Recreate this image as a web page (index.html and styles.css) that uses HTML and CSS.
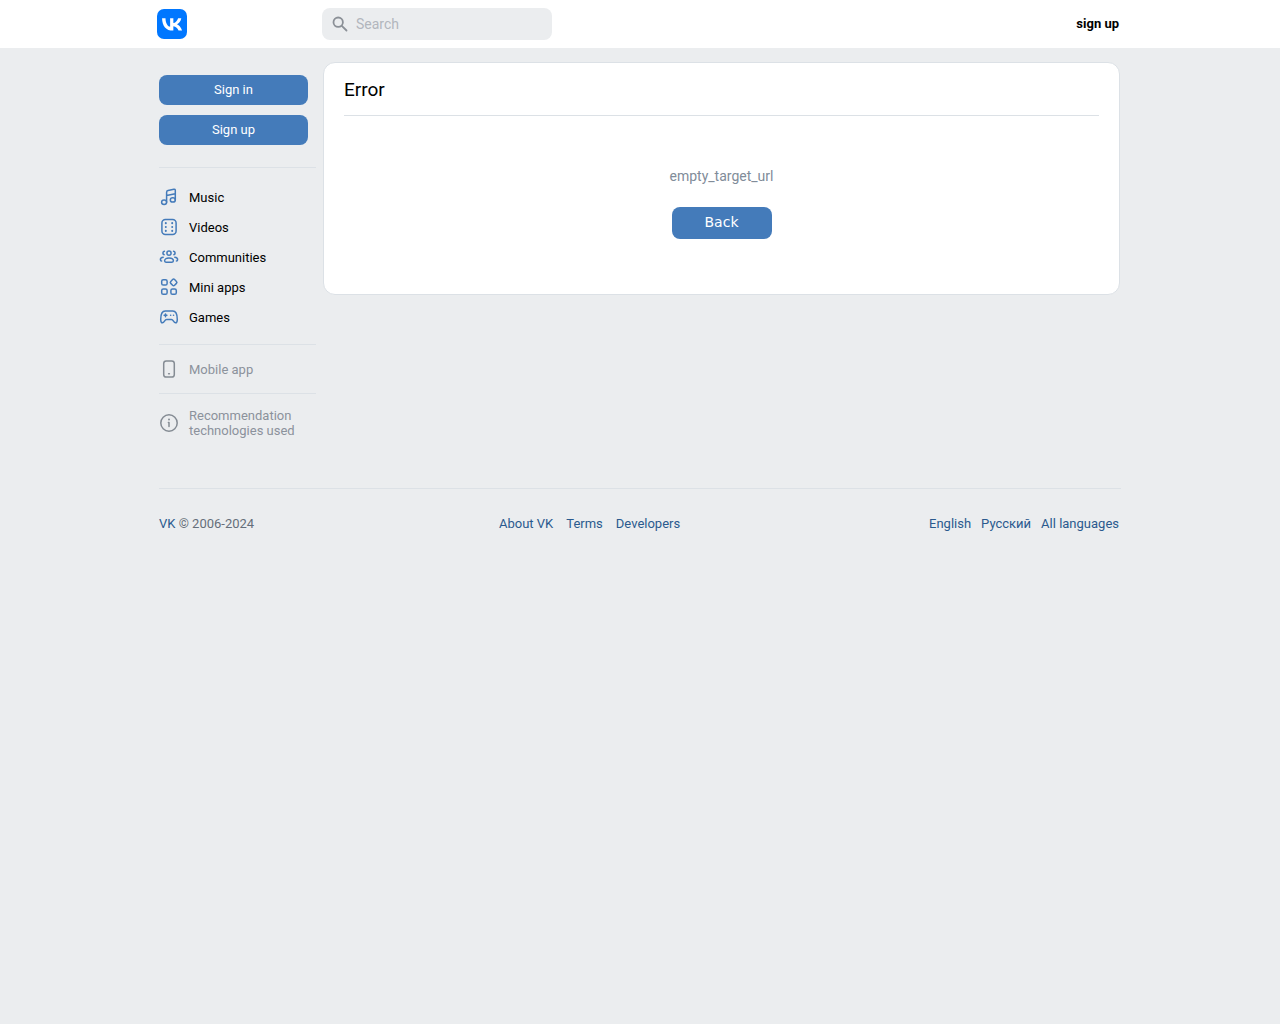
FILE: index.html
```html
<!DOCTYPE html>
<html lang="en">
<head>
<meta charset="utf-8">
<meta name="viewport" content="width=device-width, initial-scale=1">
<title>Error | VK</title>
<link rel="stylesheet" href="styles.css">
</head>
<body>
<header class="header">
  <div class="container header-inner">
    <a class="logo" href="#" aria-label="VK">
      <svg width="30" height="30" viewBox="0 0 24 24"><rect width="24" height="24" rx="5.6" fill="#07f"/><path fill="#fff" d="M12.77 17.29c-5.47 0-8.59-3.75-8.72-9.99h2.74c.09 4.58 2.11 6.52 3.71 6.92V7.3h2.58v3.95c1.58-.17 3.24-1.97 3.8-3.95h2.58c-.43 2.44-2.23 4.24-3.51 4.98 1.28.6 3.33 2.17 4.11 5.01h-2.84c-.61-1.9-2.13-3.37-4.14-3.57v3.57z"/></svg>
    </a>
    <label class="search">
      <svg width="16" height="16" viewBox="0 0 16 16" fill="none" stroke="currentColor" stroke-width="1.8" stroke-linecap="round" aria-hidden="true"><circle cx="6.2" cy="6.2" r="4.7"/><path d="m9.8 9.8 4.7 4.7"/></svg>
      <input class="search-input" type="search" placeholder="Search" aria-label="Search">
    </label>
    <a class="signup-link" href="#">sign up</a>
  </div>
</header>

<div class="container layout">
  <aside class="sidebar">
    <div class="auth">
      <button class="button" type="button">Sign in</button>
      <button class="button" type="button">Sign up</button>
    </div>
    <nav class="menu">
      <a class="menu-item" href="#"><svg class="icon" viewBox="0 0 20 20"><ellipse cx="5.1" cy="15.3" rx="2.5" ry="2.2"/><ellipse cx="13.8" cy="12.9" rx="2.5" ry="2.2"/><path d="M7.600 15.300V5.400c0-1 .5-1.600 1.400-1.800l5.900-1.300c.9-.2 1.400.2 1.400 1.100v9.500M7.600 8.600l8.700-1.900"/></svg>Music</a>
      <a class="menu-item" href="#"><svg class="icon" viewBox="0 0 20 20"><rect x="2.9" y="2.4" width="14.2" height="15.2" rx="3.5"/><path class="dots" d="M6.800 6v.2m0 3.700v.2m0 3.700v.2M13.200 6v.2m0 3.700v.2m0 3.700v.2"/></svg>Videos</a>
      <a class="menu-item" href="#"><svg class="icon" viewBox="0 0 20 20"><circle cx="10" cy="6.2" r="2.1"/><path d="M10 10.900c-2.700 0-4.400 1.300-4.400 2.900 0 .9.500 1.400 1.400 1.400h6c.9 0 1.400-.5 1.400-1.400 0-1.600-1.700-2.900-4.400-2.900ZM5.400 4.200a1.900 1.900 0 0 0-.3 3.600M14.600 4.200a1.900 1.900 0 0 1 .3 3.600M4.200 10.300c-1.700.1-2.800 1.100-2.800 2.400 0 .8.400 1.300 1.200 1.300M15.800 10.300c1.700.1 2.800 1.100 2.800 2.400 0 .8-.4 1.300-1.200 1.300"/></svg>Communities</a>
      <a class="menu-item" href="#"><svg class="icon" viewBox="0 0 20 20"><rect x="2.7" y="2.7" width="5.4" height="5.4" rx="1.6"/><rect x="2.7" y="11.9" width="5.4" height="5.4" rx="1.6"/><rect x="11.9" y="11.9" width="5.4" height="5.4" rx="1.6"/><rect x="11.9" y="2.7" width="5.4" height="5.4" rx="1.4" transform="rotate(45 14.6 5.4)"/></svg>Mini apps</a>
      <a class="menu-item" href="#"><svg class="icon" viewBox="0 0 20 20"><path d="M6.300 4h7.400c2.900 0 4.600 2.800 4.600 8.400 0 2.200-.6 3.400-1.800 3.400-2 0-2-3.400-4.200-3.400H7.700c-2.200 0-2.200 3.400-4.200 3.400-1.200 0-1.800-1.200-1.800-3.400C1.700 6.800 3.400 4 6.300 4ZM6.500 6.900v2.800M5.100 8.300h2.800M11.600 8.300h.1M14.500 8.300h.1"/></svg>Games</a>
    </nav>
    <a class="menu-item muted app" href="#"><svg class="icon" viewBox="0 0 20 20"><rect x="4.7" y="1.9" width="10.6" height="16.200" rx="2.6"/><path d="M9.600 14.700h.8"/></svg>Mobile app</a>
    <a class="menu-item muted info" href="#"><svg class="icon" viewBox="0 0 20 20"><circle cx="10" cy="10" r="8.2"/><path d="M9.400 9.500h.6v4"/><path class="dots" d="M10 6.500v.1"/></svg><span>Recommendation technologies used</span></a>
  </aside>
  <main class="card">
    <h1 class="title">Error</h1>
    <div class="message">
      <p class="text">empty_target_url</p>
      <button class="button back" type="button">Back</button>
    </div>
  </main>
</div>

<footer class="container footer">
  <div class="copyright"><a href="#">VK</a> © 2006-2024</div>
  <nav class="footer-links"><a href="#">About VK</a><a href="#">Terms</a><a href="#">Developers</a></nav>
  <nav class="languages"><a href="#">English</a><a href="#">Русский</a><a href="#">All languages</a></nav>
</footer>
</body>
</html>
```

FILE: styles.css
```css
* { box-sizing: border-box; }

body {
  margin: 0;
  background: #ebedef;
  color: #000;
  font: 13px/15px Roboto, "Liberation Sans", sans-serif;
}

a { color: #2a5a8e; text-decoration: none; }

.container {
  max-width: 962px;
  margin: 0 auto;
  padding-right: 2px;
}

.header { background: #fff; }

.header-inner {
  display: flex;
  align-items: center;
  height: 48px;
}

.logo {
  width: 165px;
  height: 30px;
  margin-left: -2px;
}

.search {
  display: flex;
  align-items: center;
  gap: 8px;
  width: 230px;
  height: 32px;
  padding: 0 10px;
  border-radius: 8px;
  background: #ebedef;
  color: #8b9097;
}

.search-input {
  flex: 1;
  min-width: 0;
  padding: 0;
  border: 0;
  outline: 0;
  background: none;
  font: 14px/20px Roboto, "Liberation Sans", sans-serif;
}

.search-input::placeholder { color: #b2b6bd; }

.signup-link {
  margin-left: auto;
  padding-bottom: 2px;
  color: #000;
  font-weight: 700;
}

.layout {
  display: flex;
  align-items: flex-start;
  gap: 7px;
  padding-top: 14px;
  padding-right: 1px;
}

.sidebar {
  flex: 0 0 157px;
  padding-top: 13px;
}

.auth {
  display: grid;
  gap: 10px;
  padding: 0 8px 22px 0;
}

.button {
  height: 30px;
  padding: 0 0 2px;
  border: 0;
  border-radius: 8px;
  background: #447bba;
  color: #fff;
  font: 13px/15px Roboto, "Liberation Sans", sans-serif;
}

.menu {
  padding: 14px 0 12px;
  border-top: 1px solid #dce1e6;
}

.menu-item {
  display: flex;
  align-items: center;
  gap: 10px;
  min-height: 30px;
  color: #000;
}

.icon {
  flex: none;
  width: 20px;
  height: 20px;
  fill: none;
  stroke: #447bba;
  stroke-width: 1.5;
  stroke-linecap: round;
  stroke-linejoin: round;
}

.dots { stroke-width: 2; }

.muted {
  border-top: 1px solid #dce1e6;
  color: #8b929c;
}

.muted .icon { stroke: #858c94; }

.app { min-height: 49px; }

.info { min-height: 59px; }

.card {
  flex: 1;
  min-width: 0;
  padding: 0 20px;
  border: 1px solid #dce1e6;
  border-radius: 12px;
  background: #fff;
}

.title {
  margin: 0;
  padding: 15px 0 13px;
  border-bottom: 1px solid #dce1e6;
  font-size: 19px;
  font-weight: 400;
  line-height: 24px;
}

.message {
  display: flex;
  flex-direction: column;
  align-items: center;
  gap: 21px;
  padding: 50px 0 55px;
}

.text {
  margin: 0;
  color: #818c99;
  font-size: 14px;
  line-height: 20px;
}

.back {
  width: 100px;
  height: 32px;
  font: 14px/18px "DejaVu Sans", sans-serif;
}

.footer {
  display: grid;
  grid-template-columns: 340px 1fr auto;
  margin-top: 36px;
  padding-top: 27px;
  padding-bottom: 27px;
  border-top: 1px solid #dce1e6;
}

.copyright { color: #656f7a; }

.footer-links { display: flex; gap: 13px; }

.languages { display: flex; gap: 10px; }
```
